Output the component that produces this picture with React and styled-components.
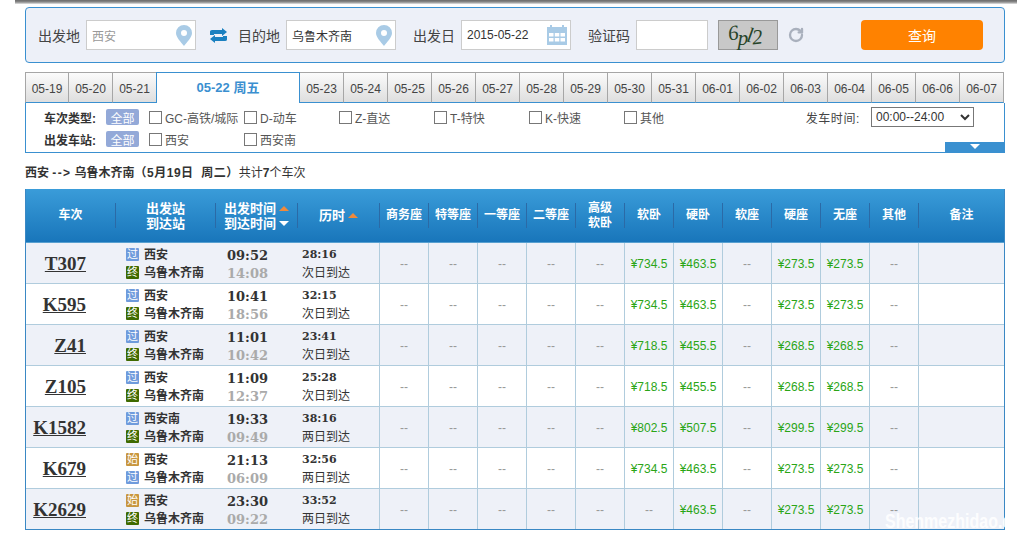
import React from 'react';
import styled, { createGlobalStyle } from 'styled-components';
import { RotateCw } from 'lucide-react';

const Global = createGlobalStyle`
  html, body { margin: 0; padding: 0; background: #fff; }
  body { font-family: "Liberation Sans", "Noto Sans CJK SC", sans-serif; font-size: 12px; color: #333; overflow: hidden; }
  * { box-sizing: border-box; }
`;

const Page = styled.div`
  position: relative;
  width: 1036px;
  height: 538px;
  overflow: hidden;
`;
const TopShadow = styled.div`
  height: 4px;
  margin: 0 19px 3px 15px;
  background: linear-gradient(#6a6a6a, #8a8a8a 50%, #e4e4e4);
`;
const Main = styled.div`
  width: 980px;
  margin-left: 25px;
`;

const SearchBox = styled.form`
  display: flex;
  align-items: center;
  height: 56px;
  padding: 0 21px 0 12px;
  background: #edf0f8;
  border: 1px solid #3a90d0;
  border-radius: 4px;
`;
const SearchLabel = styled.label`
  font-size: 14px;
  color: #444;
  margin-right: 6px;
  margin-left: ${p => p.$gap || 0}px;
  white-space: nowrap;
`;
const InputWrap = styled.div`
  display: flex;
  align-items: center;
  width: ${p => p.$w}px;
  height: 30px;
  padding: 0 3px 0 5px;
  background: #fff;
  border: 1px solid #ccc;
`;
const TextInput = styled.input`
  flex: 1;
  min-width: 0;
  border: 0;
  padding: 0;
  outline: 0;
  background: transparent;
  font: 12px "Liberation Sans", "Noto Sans CJK SC", sans-serif;
  color: ${p => p.$muted ? '#999' : '#333'};
`;
const SwapIcon = styled.svg`
  width: 17px;
  height: 15px;
  margin: 0 11px 0 14px;
  flex: none;
`;
const Captcha = styled.div`
  width: 60px;
  height: 30px;
  margin-left: 10px;
  background: #c8c8c8;
  border: 1px solid #999;
  display: flex;
  align-items: center;
  justify-content: center;
  padding-right: 6px;
  font: italic 21px "Liberation Serif", serif;
  color: #264428;
  letter-spacing: -1px;
`;
const CaptchaGlyph = styled.span`
  display: inline-block;
  transform: translateY(${p => p.$y}px) rotate(${p => p.$r}deg);
`;
const Refresh = styled.div`
  display: flex;
  margin-left: 10px;
  color: #a9b0bd;
`;
const SearchButton = styled.button`
  width: 122px;
  height: 30px;
  margin-left: auto;
  border: 0;
  border-radius: 4px;
  background: #ff8200;
  color: #fff;
  font: 14px "Liberation Sans", "Noto Sans CJK SC", sans-serif;
`;

const Tabs = styled.div`
  display: flex;
  height: 31px;
  margin-top: 9px;
`;
const Tab = styled.div`
  width: 44px;
  flex: none;
  display: flex;
  align-items: center;
  justify-content: center;
  padding-top: 2px;
  color: #444;
  background: linear-gradient(#fbfbfb, #dedede);
  border-top: 1px solid #a6a6a6;
  border-right: 1px solid #a6a6a6;
  border-bottom: 1px solid #3a90d0;
  &:first-child { border-left: 1px solid #a6a6a6; }
`;
const ActiveTab = styled.div`
  width: 144px;
  flex: none;
  margin-left: -1px;
  display: flex;
  justify-content: center;
  padding-top: 4px;
  font-size: 13px;
  font-weight: bold;
  color: #3a8fd0;
  background: #fff;
  border: 1px solid #3a90d0;
  border-bottom: 0;
`;

const FilterPanel = styled.div`
  position: relative;
  display: flex;
  height: 50px;
  padding: 3px 0 0 18px;
  border: 1px solid #3a90d0;
  border-top: 0;
`;
const FilterRows = styled.div`
  flex: 1;
`;
const FilterRow = styled.div`
  display: flex;
  align-items: center;
  height: 22px;
`;
const FilterLabel = styled.span`
  width: 62px;
  flex: none;
  font-weight: bold;
  color: #333;
`;
const Chip = styled.span`
  width: 33px;
  height: 16px;
  margin-right: 10px;
  flex: none;
  display: flex;
  align-items: center;
  justify-content: center;
  background: #93a9d8;
  border-radius: 2px;
  color: #fff;
`;
const Option = styled.label`
  width: 95px;
  flex: none;
  display: flex;
  align-items: center;
  gap: 3px;
  color: #555;
  white-space: nowrap;
`;
const Check = styled.input.attrs({ type: 'checkbox' })`
  appearance: none;
  width: 13px;
  height: 13px;
  margin: 0;
  background: #fff;
  border: 1px solid #777;
`;
const TimeFilter = styled.div`
  display: flex;
  align-items: center;
  align-self: flex-start;
  height: 22px;
  margin-right: 30px;
  gap: 11px;
  color: #444;
  letter-spacing: .6px;
  white-space: nowrap;
`;
const TimeSelect = styled.select`
  width: 103px;
  height: 20px;
  padding: 0;
  background: #fff;
  border: 1px solid #777;
  border-radius: 0;
  font: 12px "Liberation Sans", sans-serif;
  letter-spacing: 0;
  color: #333;
`;
const Collapse = styled.div`
  position: absolute;
  right: -1px;
  bottom: 0;
  width: 60px;
  height: 10px;
  display: flex;
  justify-content: center;
  background: #3a90d0;
  &::after {
    content: "";
    margin-top: 2px;
    height: 0;
    border-left: 5px solid transparent;
    border-right: 5px solid transparent;
    border-top: 5px solid #fff;
  }
`;

const Summary = styled.p`
  margin: 0;
  height: 36px;
  padding-top: 2px;
  line-height: 37px;
  font-size: 12px;
  color: #333;
  white-space: pre;
`;
const Strong = styled.b`
  font-weight: bold;
  letter-spacing: ${p => p.$track || 0}px;
`;

const TrainTable = styled.table`
  width: 980px;
  table-layout: fixed;
  border-collapse: separate;
  border-spacing: 0;
  border: 1px solid #3a88c4;
  border-top: 0;
`;
const HeadRow = styled.tr`
  height: 54px;
  background: linear-gradient(#3a9cd9, #1875ba);
`;
const Th = styled.th`
  padding: 0;
  border-bottom: 1px solid #58a0d0;
  font-weight: bold;
  font-size: 12px;
  color: #fff;
  line-height: 15px;
`;
const ThInner = styled.div`
  display: flex;
  flex-direction: column;
  align-items: center;
  justify-content: center;
  height: 25px;
  border-right: ${p => p.$last ? '0' : '1px solid #2b6aa6'};
`;
const ThLine = styled.span`
  display: flex;
  align-items: center;
  gap: 3px;
  font-size: 13px;
`;
const Caret = styled.i`
  width: 0;
  height: 0;
  border-left: 5px solid transparent;
  border-right: 5px solid transparent;
  ${p => p.$down ? 'border-top: 5px solid #fff;' : 'border-bottom: 5px solid #f08a3c;'}
`;
const Row = styled.tr`
  height: ${p => p.$last ? 40 : 41}px;
  background: ${p => p.$odd ? '#eef1f8' : '#fff'};
`;
const Td = styled.td`
  padding: 0;
  text-align: center;
  border-bottom: ${p => p.$last ? '0' : '1px solid #b0ccdd'};
  border-right: ${p => p.$end ? '0' : '1px solid #b0ccdd'};
`;
const SeatTd = styled(Td)`
  padding-top: 1px;
`;
const PlainTd = styled(Td)`
  border-right: ${p => p.$line ? '1px solid #b0ccdd' : '0'};
  text-align: left;
`;
const TrainNo = styled.a`
  display: block;
  padding-right: 30px;
  text-align: right;
  font: bold 19px/1 "Liberation Serif", serif;
  color: #333;
  text-decoration: underline;
`;
const Line = styled.div`
  display: flex;
  align-items: center;
  gap: 5px;
  height: 18px;
`;
const Stations = styled.div`
  padding: 0 0 2px 10px;
  font-weight: bold;
  color: #333;
`;
const Badge = styled.span`
  width: 13px;
  height: 13px;
  margin-top: 3px;
  flex: none;
  display: flex;
  align-items: center;
  justify-content: center;
  border-radius: 1px;
  font-size: 11px;
  font-weight: normal;
  line-height: 1;
  color: #fff;
  background: ${p => ({ 过: '#6f9bdc', 终: '#3f6a00', 始: '#c8963e' }[p.$t])};
`;
const Times = styled.div`
  padding: 3px 0 0 11px;
  font: bold 13px/18px "DejaVu Serif", serif;
`;
const TimeLine = styled.div`
  color: ${p => p.$arr ? '#aaa' : '#333'};
`;
const Duration = styled.div`
  padding: 2px 0 0 4px;
  line-height: 18px;
`;
const DurationTime = styled.div`
  font: bold 11px/18px "DejaVu Serif", serif;
`;
const Price = styled.span`
  color: #2aa516;
`;
const Dash = styled.span`
  color: #999;
`;
const Watermark = styled.div`
  position: absolute;
  left: 885px;
  top: 511px;
  font: bold 20px/20px "Liberation Sans", sans-serif;
  color: rgba(255,255,255,.9);
  transform: scaleX(.8);
  transform-origin: left;
  white-space: nowrap;
`;

const Pin = () => (
  <svg width="16" height="21" viewBox="0 0 16 21" style={{ flex: 'none' }}>
    <path fill="#a9cbe6" fillRule="evenodd" d="M8 0a8 8 0 0 1 8 8c0 4.500-5 9-8 13C5 17 0 12.500 0 8a8 8 0 0 1 8-8zm0 5a3 3 0 1 0 0 6 3 3 0 0 0 0-6z" />
  </svg>
);
const Calendar = () => (
  <svg width="20" height="20" viewBox="0 0 20 20" style={{ flex: 'none' }}>
    <path fill="#a9cbe6" d="M0 2h3V0h2v2h10V0h2v2h3v18H0z" />
    <path fill="#fff" d="M2 8h4.500v3.500H2zM7.800 8h4.500v3.500H7.800zM13.500 8H18v3.500h-4.500zM2 13h4.500v3.500H2zM7.800 13h4.500v3.500H7.800zM13.500 13H18v3.500h-4.500z" />
  </svg>
);

const rail = ['05-19', '05-20', '05-21'];
const after = ['05-23','05-24','05-25','05-26','05-27','05-28','05-29','05-30','05-31','06-01','06-02','06-03','06-04','06-05','06-06','06-07'];
const seatHeads = ['商务座', '特等座', '一等座', '二等座', ['高级', '软卧'], '软卧', '硬卧', '软座', '硬座', '无座', '其他'];
const trains = [
  { no: 'T307', from: '西安', to: '乌鲁木齐南', a: '过', b: '终', dep: '09:52', arr: '14:08', dur: '28:16', day: '次日到达', p: ['734.5', '463.5', '273.5'] },
  { no: 'K595', from: '西安', to: '乌鲁木齐南', a: '过', b: '终', dep: '10:41', arr: '18:56', dur: '32:15', day: '次日到达', p: ['734.5', '463.5', '273.5'] },
  { no: 'Z41', from: '西安', to: '乌鲁木齐南', a: '过', b: '终', dep: '11:01', arr: '10:42', dur: '23:41', day: '次日到达', p: ['718.5', '455.5', '268.5'] },
  { no: 'Z105', from: '西安', to: '乌鲁木齐南', a: '过', b: '终', dep: '11:09', arr: '12:37', dur: '25:28', day: '次日到达', p: ['718.5', '455.5', '268.5'] },
  { no: 'K1582', from: '西安南', to: '乌鲁木齐南', a: '过', b: '终', dep: '19:33', arr: '09:49', dur: '38:16', day: '两日到达', p: ['802.5', '507.5', '299.5'] },
  { no: 'K679', from: '西安', to: '乌鲁木齐南', a: '始', b: '过', dep: '21:13', arr: '06:09', dur: '32:56', day: '两日到达', p: ['734.5', '463.5', '273.5'] },
  { no: 'K2629', from: '西安', to: '乌鲁木齐南', a: '始', b: '终', dep: '23:30', arr: '09:22', dur: '33:52', day: '两日到达', p: [null, '463.5', '273.5'] },
];
const types = ['GC-高铁/城际', 'D-动车', 'Z-直达', 'T-特快', 'K-快速', '其他'];

const Seat = ({ v, last }) => (
  <SeatTd $last={last}>{v ? <Price>¥{v}</Price> : <Dash>--</Dash>}</SeatTd>
);

export default function App() {
  return (
    <Page>
      <Global />
      <TopShadow />
      <Main>
        <SearchBox>
          <SearchLabel>出发地</SearchLabel>
          <InputWrap $w={110}><TextInput $muted defaultValue="西安" /><Pin /></InputWrap>
          <SwapIcon viewBox="0 0 17 15">
            <path fill="#1a80c0" d="M0 7V3.500Q0 2 2 2H12V0L17 4 12 8V6H4V7zM17 8V11.500Q17 13 15 13H5V15L0 11 5 7V9H13V8z" />
          </SwapIcon>
          <SearchLabel>目的地</SearchLabel>
          <InputWrap $w={110}><TextInput defaultValue="乌鲁木齐南" /><Pin /></InputWrap>
          <SearchLabel $gap={17}>出发日</SearchLabel>
          <InputWrap $w={110}><TextInput defaultValue="2015-05-22" /><Calendar /></InputWrap>
          <SearchLabel $gap={17}>验证码</SearchLabel>
          <InputWrap $w={72}><TextInput /></InputWrap>
          <Captcha>
            <CaptchaGlyph $y={-2} $r={-8}>6</CaptchaGlyph>
            <CaptchaGlyph $y={3} $r={0}>p</CaptchaGlyph>
            <CaptchaGlyph $y={0} $r={10}>l</CaptchaGlyph>
            <CaptchaGlyph $y={2} $r={-6}>2</CaptchaGlyph>
          </Captcha>
          <Refresh><RotateCw size={16} strokeWidth={3.5} /></Refresh>
          <SearchButton type="button">查询</SearchButton>
        </SearchBox>

        <Tabs>
          {rail.map(d => <Tab key={d}>{d}</Tab>)}
          <ActiveTab>05-22 周五</ActiveTab>
          {after.map(d => <Tab key={d}>{d}</Tab>)}
        </Tabs>

        <FilterPanel>
          <FilterRows>
            <FilterRow>
              <FilterLabel>车次类型:</FilterLabel>
              <Chip>全部</Chip>
              {types.map(t => <Option key={t}><Check />{t}</Option>)}
            </FilterRow>
            <FilterRow>
              <FilterLabel>出发车站:</FilterLabel>
              <Chip>全部</Chip>
              <Option><Check />西安</Option>
              <Option><Check />西安南</Option>
            </FilterRow>
          </FilterRows>
          <TimeFilter>
            发车时间:
            <TimeSelect defaultValue="all"><option value="all">00:00--24:00</option></TimeSelect>
          </TimeFilter>
          <Collapse />
        </FilterPanel>

        <Summary>
          <Strong>西安 </Strong><Strong $track={1.3}>--&gt;</Strong><Strong> 乌鲁木齐南</Strong><Strong $track={.5}>（5月19日  周二）</Strong>共计<Strong>7</Strong>个车次
        </Summary>

        <TrainTable>
          <colgroup>
            <col style={{ width: 90 }} />
            <col style={{ width: 100 }} />
            <col style={{ width: 82 }} />
            <col style={{ width: 82 }} />
            {seatHeads.map((_, i) => <col key={i} style={{ width: 49 }} />)}
            <col />
          </colgroup>
          <thead>
            <HeadRow>
              <Th><ThInner>车次</ThInner></Th>
              <Th><ThInner><ThLine>出发站</ThLine><ThLine>到达站</ThLine></ThInner></Th>
              <Th><ThInner><ThLine>出发时间<Caret /></ThLine><ThLine>到达时间<Caret $down /></ThLine></ThInner></Th>
              <Th><ThInner><ThLine>历时<Caret /></ThLine></ThInner></Th>
              {seatHeads.map((h, i) => (
                <Th key={i}><ThInner>{Array.isArray(h) ? h.map(x => <span key={x}>{x}</span>) : h}</ThInner></Th>
              ))}
              <Th><ThInner $last>备注</ThInner></Th>
            </HeadRow>
          </thead>
          <tbody>
            {trains.map((t, i) => {
              const last = i === trains.length - 1;
              return (
                <Row key={t.no} $odd={i % 2 === 0} $last={last}>
                  <PlainTd $last={last}><TrainNo>{t.no}</TrainNo></PlainTd>
                  <PlainTd $last={last}>
                    <Stations>
                      <Line><Badge $t={t.a}>{t.a}</Badge>{t.from}</Line>
                      <Line><Badge $t={t.b}>{t.b}</Badge>{t.to}</Line>
                    </Stations>
                  </PlainTd>
                  <PlainTd $last={last}>
                    <Times><TimeLine>{t.dep}</TimeLine><TimeLine $arr>{t.arr}</TimeLine></Times>
                  </PlainTd>
                  <PlainTd $last={last} $line>
                    <Duration><DurationTime>{t.dur}</DurationTime>{t.day}</Duration>
                  </PlainTd>
                  {[null, null, null, null, null, t.p[0], t.p[1], null, t.p[2], t.p[2], null].map((v, j) => (
                    <Seat key={j} v={v} last={last} />
                  ))}
                  <Td $last={last} $end />
                </Row>
              );
            })}
          </tbody>
        </TrainTable>
      </Main>
      <Watermark>Shenmezhidao.com</Watermark>
    </Page>
  );
}
